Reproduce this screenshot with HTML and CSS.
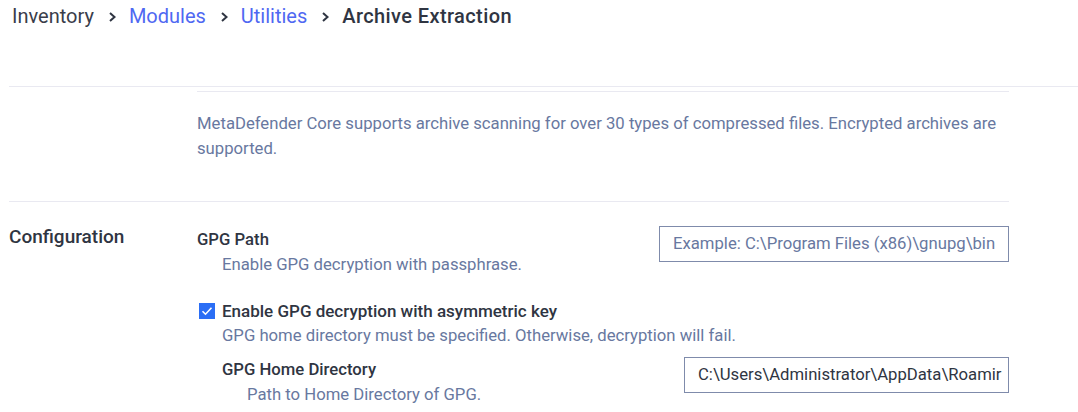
FILE: index.html
```html
<!DOCTYPE html>
<html>
<head>
<meta charset="utf-8">
<link rel="stylesheet" href="styles.css">
</head>
<body>
<nav class="breadcrumb">
  <span class="crumb">Inventory</span>
  <span class="sep"><svg width="9" height="12" viewBox="0 0 9 12"><path d="M2 2l4.5 4L2 10" fill="none" stroke="#2f3542" stroke-width="2"/></svg></span>
  <a class="crumb link">Modules</a>
  <span class="sep"><svg width="9" height="12" viewBox="0 0 9 12"><path d="M2 2l4.5 4L2 10" fill="none" stroke="#2f3542" stroke-width="2"/></svg></span>
  <a class="crumb link">Utilities</a>
  <span class="sep"><svg width="9" height="12" viewBox="0 0 9 12"><path d="M2 2l4.5 4L2 10" fill="none" stroke="#2f3542" stroke-width="2"/></svg></span>
  <span class="crumb current">Archive Extraction</span>
</nav>
<div class="divider"></div>
<main class="section">
  <div class="row intro">
    <div class="row-label"></div>
    <div class="row-body intro-body">
      <p class="desc">MetaDefender Core supports archive scanning for over 30 types of compressed files. Encrypted archives are supported.</p>
    </div>
  </div>
  <div class="row config">
    <div class="row-label">Configuration</div>
    <div class="row-body">
      <div class="field">
        <div class="field-text">
          <div class="field-title">GPG Path</div>
          <div class="field-help indent">Enable GPG decryption with passphrase.</div>
        </div>
        <div class="input">Example: C:\Program Files (x86)\gnupg\bin</div>
      </div>
      <div class="check-row">
        <span class="checkbox"><svg width="16" height="16" viewBox="0 0 16 16"><path d="M3.5 8.2l3 3 6-6.4" fill="none" stroke="#fff" stroke-width="1.6"/></svg></span>
        <span class="check-label">Enable GPG decryption with asymmetric key</span>
      </div>
      <div class="field-help indent">GPG home directory must be specified. Otherwise, decryption will fail.</div>
      <div class="field sub">
        <div class="field-text">
          <div class="field-title">GPG Home Directory</div>
          <div class="field-help indent">Path to Home Directory of GPG.</div>
        </div>
        <div class="input value narrow">C:\Users\Administrator\AppData\Roamir</div>
      </div>
    </div>
  </div>
</main>
</body>
</html>
```

FILE: styles.css
```css
* { box-sizing: border-box; }
body {
  margin: 0;
  background: #fff;
  font-family: Roboto, "Liberation Sans", sans-serif;
  color: #2f3542;
  overflow: hidden;
}
.breadcrumb {
  display: flex;
  align-items: flex-start;
  padding: 3px 0 0 12px;
  height: 86px;
  font-size: 20px;
  line-height: 27px;
}
.crumb { color: #3a3d4a; }
.crumb.link { color: #4f68f2; }
.crumb.current { color: #2f3542; font-weight: 500; letter-spacing: 0.4px; }
.sep { display: flex; align-items: center; height: 27px; margin: 0 12px 0 14px; }
.divider {
  margin-left: 9px;
  border-top: 1px solid #e9e9f1;
}
.section {
  margin-left: 9px;
  width: 1000px;
}
.row {
  display: grid;
  grid-template-columns: 188px 1fr;
}
.intro-body {
  margin-top: 4px;
  border-top: 1px solid #e9e9f1;
  padding: 19px 0 40px;
}
.desc {
  margin: 0;
  font-size: 16.7px;
  line-height: 25px;
  color: #6878a0;
}
.config {
  border-top: 1px solid #e9e9f1;
  padding-top: 23px;
}
.row-label {
  font-size: 19px;
  font-weight: 500;
  color: #2f3542;
  line-height: 24px;
}
.field {
  display: flex;
  justify-content: space-between;
  align-items: flex-start;
}
.field-title {
  font-size: 16.7px;
  font-weight: 500;
  color: #2f3542;
  line-height: 25px;
  margin-top: 2px;
}
.field-help {
  font-size: 16.7px;
  line-height: 25px;
  color: #6878a0;
}
.indent { padding-left: 25px; }
.input {
  width: 350px;
  height: 36px;
  margin-top: 1px;
  border: 1px solid #7f8bab;
  padding: 0 13px;
  font-size: 16.7px;
  line-height: 34px;
  color: #6878a0;
  white-space: nowrap;
  overflow: hidden;
}
.input.value { color: #2f3542; }
.input.narrow { width: 325px; margin-top: 0; }
.check-row {
  display: flex;
  align-items: center;
  margin-top: 21px;
  height: 25px;
}
.checkbox {
  width: 16px;
  height: 16px;
  background: #2b6ef5;
  margin: 0 7px 0 2px;
  display: flex;
}
.check-label {
  font-size: 17px;
  font-weight: 500;
  color: #2f3542;
}
.field.sub { padding-left: 25px; margin-top: 9px; }
.field.sub .field-title { margin-top: 0; }
```
